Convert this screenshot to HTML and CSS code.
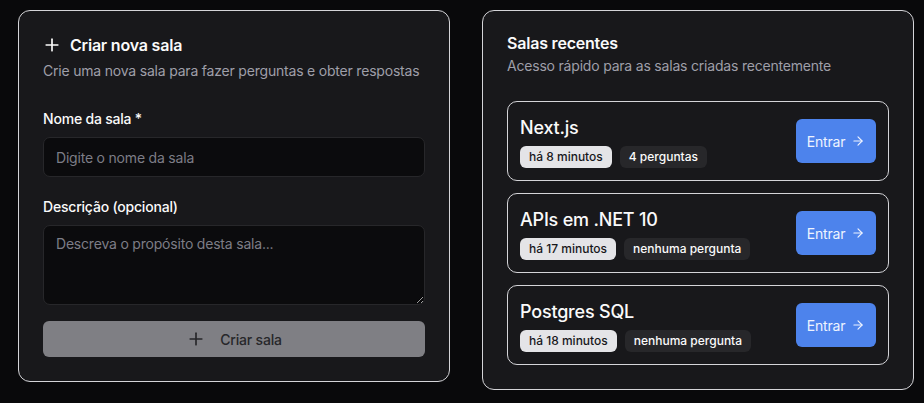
FILE: index.html
```html
<!DOCTYPE html>
<html lang="pt-BR">
<head>
<meta charset="utf-8">
<title>Salas</title>
<link rel="stylesheet" href="styles.css">
</head>
<body>
<main class="grid">
  <section class="card create">
    <header class="card-header">
      <h2 class="card-title with-icon">
        <svg class="icon-20" viewBox="0 0 24 24" fill="none" stroke="currentColor" stroke-width="2" stroke-linecap="round" stroke-linejoin="round"><path d="M5 12h14"/><path d="M12 5v14"/></svg>
        Criar nova sala
      </h2>
      <p class="card-desc">Crie uma nova sala para fazer perguntas e obter respostas</p>
    </header>
    <form class="form">
      <div class="field">
        <label class="label" for="nome">Nome da sala *</label>
        <input id="nome" class="input" type="text" placeholder="Digite o nome da sala">
      </div>
      <div class="field field-2">
        <label class="label" for="desc">Descrição (opcional)</label>
        <textarea id="desc" class="textarea" placeholder="Descreva o propósito desta sala..."></textarea>
      </div>
      <button type="button" class="btn-create" disabled>
        <svg class="icon-20" viewBox="0 0 24 24" fill="none" stroke="currentColor" stroke-width="2" stroke-linecap="round" stroke-linejoin="round"><path d="M5 12h14"/><path d="M12 5v14"/></svg>
        <span>Criar sala</span>
      </button>
    </form>
  </section>

  <section class="card recent">
    <header class="card-header">
      <h2 class="card-title tight">Salas recentes</h2>
      <p class="card-desc">Acesso rápido para as salas criadas recentemente</p>
    </header>
    <div class="rooms">
      <div class="room">
        <div class="room-info">
          <h3 class="room-title">Next.js</h3>
          <div class="badges">
            <span class="badge light">há 8 minutos</span>
            <span class="badge dark">4 perguntas</span>
          </div>
        </div>
        <button type="button" class="btn-enter">Entrar
          <svg class="icon-14" viewBox="0 0 24 24" fill="none" stroke="currentColor" stroke-width="2" stroke-linecap="round" stroke-linejoin="round"><path d="M5 12h14"/><path d="m12 5 7 7-7 7"/></svg>
        </button>
      </div>
      <div class="room">
        <div class="room-info">
          <h3 class="room-title">APIs em .NET 10</h3>
          <div class="badges">
            <span class="badge light">há 17 minutos</span>
            <span class="badge dark">nenhuma pergunta</span>
          </div>
        </div>
        <button type="button" class="btn-enter">Entrar
          <svg class="icon-14" viewBox="0 0 24 24" fill="none" stroke="currentColor" stroke-width="2" stroke-linecap="round" stroke-linejoin="round"><path d="M5 12h14"/><path d="m12 5 7 7-7 7"/></svg>
        </button>
      </div>
      <div class="room">
        <div class="room-info">
          <h3 class="room-title">Postgres SQL</h3>
          <div class="badges">
            <span class="badge light">há 18 minutos</span>
            <span class="badge dark">nenhuma pergunta</span>
          </div>
        </div>
        <button type="button" class="btn-enter">Entrar
          <svg class="icon-14" viewBox="0 0 24 24" fill="none" stroke="currentColor" stroke-width="2" stroke-linecap="round" stroke-linejoin="round"><path d="M5 12h14"/><path d="m12 5 7 7-7 7"/></svg>
        </button>
      </div>
    </div>
  </section>
</main>
</body>
</html>
```

FILE: styles.css
```css
* { box-sizing: border-box; }
html, body { margin: 0; }
body {
  background: #09090b;
  color: #fafafa;
  font-family: Inter, "Noto Sans", sans-serif;
  font-size: 14px;
  line-height: 20px;
  letter-spacing: -0.2px;
  padding: 10px 0 0 18px;
}
.grid {
  display: grid;
  grid-template-columns: 432px 432px;
  column-gap: 32px;
  align-items: start;
}
.card {
  background: #18181b;
  border: 1px solid #d4d4d8;
  border-radius: 12px;
  padding: 24px;
}
.card-header { display: flex; flex-direction: column; }
.card-title {
  margin: 0;
  font-size: 16px;
  font-weight: 600;
  line-height: 20px;
  color: #fafafa;
}
.card-title.with-icon {
  display: flex;
  align-items: center;
  gap: 8px;
  margin-left: -1px;
}
.card-title.tight { line-height: 16px; }
.card-desc {
  margin: 6px 0 0;
  color: #9f9fa9;
  font-size: 14px;
  line-height: 20px;
  white-space: nowrap;
}
.recent .card-desc { margin-top: 5px; }
.icon-20 { width: 20px; height: 20px; flex: none; }
.icon-14 { width: 14px; height: 14px; flex: none; }

.form { display: flex; flex-direction: column; margin-top: 28px; }
.field { display: flex; flex-direction: column; gap: 8px; }
.field-2 { margin-top: 20px; }
.label { font-size: 14px; font-weight: 500; line-height: 20px; color: #fafafa; }
.input, .textarea {
  font-family: inherit;
  font-size: 14px;
  line-height: 20px;
  letter-spacing: -0.2px;
  color: #fafafa;
  background: #0b0b0d;
  border: 1px solid #27272a;
  border-radius: 7px;
  padding: 8px 12px;
  outline: none;
  width: 100%;
}
.input { height: 40px; }
.textarea { height: 80px; resize: vertical; display: block; }
.input::placeholder, .textarea::placeholder { color: #7d7d86; }

.btn-create {
  margin-top: 16px;
  height: 36px;
  border: 0;
  border-radius: 6px;
  background: #7f7f84;
  color: #27272a;
  font-family: inherit;
  font-size: 14px;
  font-weight: 500;
  letter-spacing: -0.2px;
  display: flex;
  align-items: center;
  justify-content: center;
  gap: 14px;
  padding: 0;
}

.rooms { display: flex; flex-direction: column; gap: 12px; margin-top: 25px; }
.room {
  border: 1px solid #d4d4d8;
  border-radius: 10px;
  padding: 12px;
  display: flex;
  align-items: center;
  justify-content: space-between;
}
.room-info { display: flex; flex-direction: column; }
.room-title {
  margin: 0;
  font-size: 18px;
  line-height: 28px;
  font-weight: 500;
  color: #fafafa;
}
.badges { display: flex; gap: 8px; margin-top: 4px; }
.badge {
  height: 22px;
  padding: 0 9px;
  border-radius: 6px;
  font-size: 12px;
  line-height: 22px;
  font-weight: 500;
  letter-spacing: 0;
}
.badge.light { background: #e4e4e7; color: #18181b; }
.badge.dark { background: #27272a; color: #fafafa; }

.btn-enter {
  width: 80px;
  height: 44px;
  border: 0;
  border-radius: 6px;
  background: #4d83ec;
  color: #eef3ff;
  font-family: inherit;
  font-size: 14px;
  font-weight: 400;
  letter-spacing: -0.2px;
  display: flex;
  align-items: center;
  justify-content: center;
  gap: 6px;
}
```
